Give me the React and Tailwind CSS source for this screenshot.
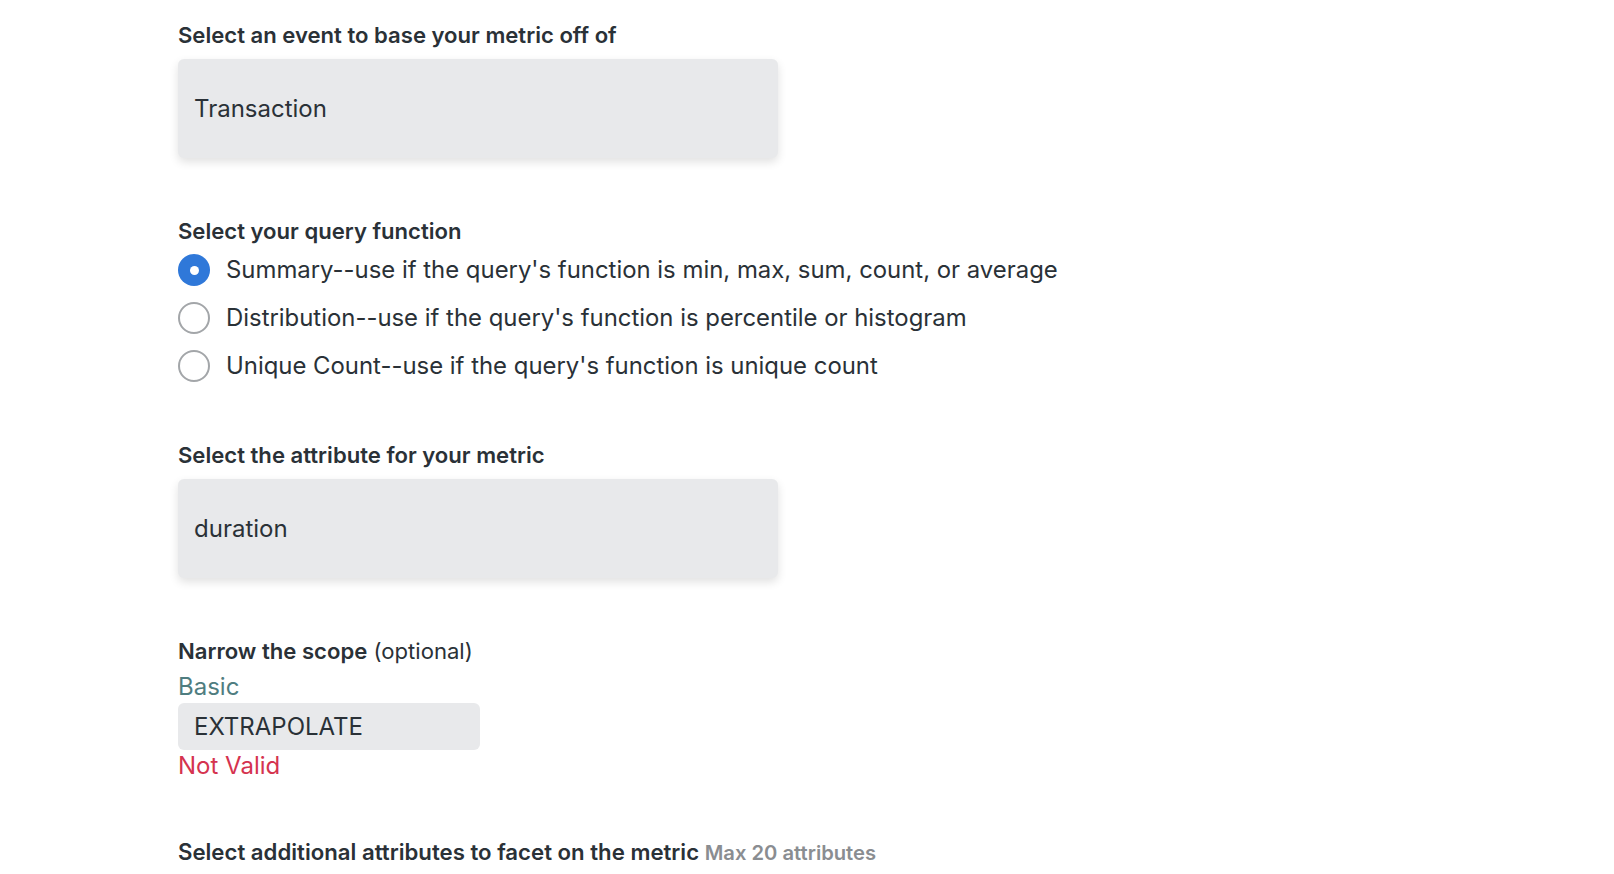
const FUNCTIONS = [
  { id: 'summary', label: "Summary--use if the query's function is min, max, sum, count, or average" },
  { id: 'distribution', label: "Distribution--use if the query's function is percentile or histogram" },
  { id: 'unique', label: "Unique Count--use if the query's function is unique count" },
]

function Label({ children }) {
  return <p className="text-[22.1px] leading-[28px] font-semibold text-[#2a3137]">{children}</p>
}

function SelectBox({ value }) {
  return (
    <div className="mt-[10px] w-[600px] h-[99px] rounded-md bg-[#e8e9eb] shadow-[0_4px_10px_rgba(0,0,0,0.12)] flex items-center px-4 text-[24px] text-[#2a3137]">
      {value}
    </div>
  )
}

function Radio({ checked, label }) {
  return (
    <label className="flex items-center gap-4 h-[48px]">
      {checked ? (
        <span className="w-8 h-8 rounded-full bg-[#2f78d9] flex items-center justify-center">
          <span className="w-[9px] h-[9px] rounded-full bg-white" />
        </span>
      ) : (
        <span className="w-8 h-8 rounded-full border-2 border-[#a3a6a9] bg-white" />
      )}
      <span className="text-[23.9px] text-[#2a3137]">{label}</span>
    </label>
  )
}

export default function App() {
  return (
    <div className="min-h-screen bg-white pl-[178px] pt-[21px] font-['Inter','Noto_Sans',sans-serif]">
      <Label>Select an event to base your metric off of</Label>
      <SelectBox value="Transaction" />

      <div className="mt-[59px]">
        <Label>Select your query function</Label>
        <div className="mt-[1px] flex flex-col">
          {FUNCTIONS.map((f, i) => (
            <Radio key={f.id} checked={i === 0} label={f.label} />
          ))}
        </div>
      </div>

      <div className="mt-[51px]">
        <Label>Select the attribute for your metric</Label>
        <SelectBox value="duration" />
      </div>

      <div className="mt-[59px]">
        <p className="text-[22.1px] leading-[28px] text-[#2a3137]">
          <span className="font-semibold">Narrow the scope</span> (optional)
        </p>
        <p className="mt-[6px] text-[24px] leading-[32px] text-[#4f7d80]">Basic</p>
        <div className="w-[302px] h-[47px] rounded-md bg-[#e8e9eb] flex items-center px-4 text-[24px] text-[#2a3137]">
          EXTRAPOLATE
        </div>
        <p className="text-[24px] leading-[32px] text-[#d5334f]">Not Valid</p>
      </div>

      <div className="mt-[56px]">
        <p className="text-[22.2px] leading-[28px] font-semibold text-[#2a3137]">
          Select additional attributes to facet on the metric{' '}
          <span className="text-[20.2px] text-[#8a8d91]">Max 20 attributes</span>
        </p>
      </div>
    </div>
  )
}
